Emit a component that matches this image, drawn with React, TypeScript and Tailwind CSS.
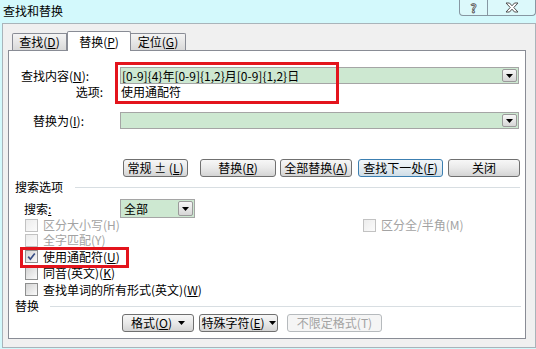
import React from "react";

function U({ children }: { children: React.ReactNode }) {
  return <span className="underline underline-offset-[1px]">{children}</span>;
}

function Arrow() {
  return (
    <svg width="7" height="4" viewBox="0 0 7 4">
      <path d="M0 0H7L3.5 4Z" fill="#000" />
    </svg>
  );
}

function DropBtn() {
  return (
    <div className="m-[1px] w-[15px] shrink-0 self-stretch border border-[#9a9a9a] rounded-[2px] bg-linear-to-b from-[#f7f7f7] to-[#d6d6d6] flex items-center justify-center">
      <Arrow />
    </div>
  );
}

function Check({ checked = false, disabled = false }: { checked?: boolean; disabled?: boolean }) {
  return (
    <div
      className={
        disabled
          ? "w-[13px] h-[13px] shrink-0 border border-[#c2c2c2] bg-linear-to-br from-[#ececec] to-[#fbfbfb]"
          : "w-[13px] h-[13px] shrink-0 border border-[#8e8f8f] bg-linear-to-br from-[#d3d3d3] to-[#fbfbfb] flex items-center justify-center"
      }
    >
      {checked && (
        <svg width="9" height="9" viewBox="0 0 9 9">
          <path d="M1.2 4.6L3.4 7.2L7.8 1.4" fill="none" stroke="#3a4f86" strokeWidth="1.7" />
        </svg>
      )}
    </div>
  );
}

function Btn({
  className,
  children,
  kind = "normal",
}: {
  className: string;
  children: React.ReactNode;
  kind?: "normal" | "focus" | "disabled";
}) {
  const look =
    kind === "focus"
      ? "border-[#3c7fb1] bg-linear-to-b from-[#f2f6f9] via-[#e4ecf1] to-[#cfdde7] text-black"
      : kind === "disabled"
      ? "border-[#b6babd] bg-[#f5f5f5] text-[#a3a3a3]"
      : "border-[#707070] bg-linear-to-b from-[#f7f7f7] via-[#e9e9e9] to-[#d4d4d4] text-black";
  return (
    <div className={`h-[18px] shrink-0 rounded-[3px] border flex items-center justify-center whitespace-nowrap ${look} ${className}`}>
      {children}
    </div>
  );
}

export default function App() {
  return (
    <div className="w-[536px] h-[349px] overflow-hidden bg-[#d3f9fc] text-[12px] leading-[14px] text-black font-['Noto_Sans_CJK_SC','Liberation_Sans',sans-serif]">
      {/* title bar */}
      <div className="flex h-[23px] items-start justify-between">
        <div className="pl-[3px] pt-[4px]">查找和替换</div>
        <div className="flex h-[16px] border border-t-0 border-[#8797a2] rounded-b-[4px] bg-[#dcf9fb]">
          <div className="w-[28px] border-r border-[#8797a2] flex items-center justify-center text-[12px] leading-[13px] font-bold text-white [-webkit-text-stroke:0.8px_#505050]">
            ?
          </div>
          <div className="w-[47px] flex items-center justify-center">
            <svg width="14" height="11" viewBox="0 0 14 11">
              <polygon
                points="1,1 4.5,1 7,3.8 9.5,1 13,1 8.8,5.5 13,10 9.5,10 7,7.2 4.5,10 1,10 5.2,5.5"
                fill="#ffffff"
                stroke="#505050"
                strokeWidth="1"
              />
            </svg>
          </div>
        </div>
      </div>

      {/* window body */}
      <div className="ml-[2px] w-[534px] h-[325px] border border-[#a9b4ba] bg-[#f0f0f0] flex flex-col">
        {/* tabs */}
        <div className="flex items-end h-[26px] pt-[7px] pl-[9px]">
          <div className="w-[55px] h-[17px] border border-b-0 border-[#898c95] rounded-tl-[2px] bg-linear-to-b from-[#f4f4f4] to-[#d9d9d9] flex items-center justify-center">
            查找(<U>D</U>)
          </div>
          <div className="relative z-10 -mb-px w-[64px] h-[20px] border border-b-0 border-[#898c95] rounded-t-[2px] bg-white flex items-center justify-center">
            替换(<U>P</U>)
          </div>
          <div className="w-[55px] h-[17px] border border-l-0 border-b-0 border-[#898c95] rounded-tr-[2px] bg-linear-to-b from-[#f4f4f4] to-[#d9d9d9] flex items-center justify-center">
            定位(<U>G</U>)
          </div>
        </div>

        {/* panel */}
        <div className="relative ml-[5px] w-[518px] h-[289px] border border-[#898c95] bg-white flex flex-col pt-[16px]">
          {/* find row */}
          <div className="flex h-[17px] items-center">
            <div className="w-[111px] shrink-0 pl-[12px] whitespace-nowrap">
              查找内容(<U>N</U>):
            </div>
            <div className="flex-1 mr-[6px] h-[17px] border border-[#a5a5a5] bg-[#cde8d1] flex">
              <div className="flex-1 pl-[1px] flex items-center whitespace-nowrap">[0-9]{"{4}"}年[0-9]{"{1,2}"}月[0-9]{"{1,2}"}日</div>
              <DropBtn />
            </div>
          </div>
          {/* options row */}
          <div className="flex h-[16px] items-center">
            <div className="w-[111px] shrink-0 pr-[17px] text-right">选项:</div>
            <div className="pl-[1px]">使用通配符</div>
          </div>
          {/* replace row */}
          <div className="flex h-[17px] items-center mt-[12px]">
            <div className="w-[111px] shrink-0 pl-[24px] whitespace-nowrap">
              替换为(<U>I</U>):
            </div>
            <div className="flex-1 mr-[6px] h-[17px] border border-[#a5a5a5] bg-[#cde8d1] flex">
              <div className="flex-1" />
              <DropBtn />
            </div>
          </div>

          {/* buttons row */}
          <div className="flex h-[18px] mt-[30px] pl-[114px]">
            <Btn className="w-[65px]">
              常规 ± (<U>L</U>)
            </Btn>
            <Btn className="w-[76px] ml-[12px]">
              替换(<U>R</U>)
            </Btn>
            <Btn className="w-[72px] ml-[4px]">
              全部替换(<U>A</U>)
            </Btn>
            <Btn className="w-[85px] ml-[6px]" kind="focus">
              查找下一处(<U>F</U>)
            </Btn>
            <Btn className="w-[72px] ml-[5px]">关闭</Btn>
          </div>

          {/* search options header */}
          <div className="flex h-[14px] items-center mt-[3px] pl-[6px]">
            <div className="whitespace-nowrap">搜索选项</div>
            <div className="flex-1 ml-[12px] mr-[5px] h-px bg-[#d8dee2]" />
          </div>

          {/* search select row */}
          <div className="flex h-[19px] items-center mt-[5px]">
            <div className="w-[111px] shrink-0 pl-[15px]">
              搜索<U>:</U>
            </div>
            <div className="w-[75px] h-[19px] border border-[#a5a5a5] bg-[#cde8d1] flex">
              <div className="flex-1 pl-[3px] flex items-center">全部</div>
              <DropBtn />
            </div>
          </div>

          {/* checkboxes */}
          <div className="flex h-[14px] items-center pl-[16px]">
            <div className="w-[338px] shrink-0 flex items-center gap-[5px] text-[#a3a3a3]">
              <Check disabled />
              <span>区分大小写(H)</span>
            </div>
            <div className="flex items-center gap-[5px] text-[#a3a3a3]">
              <Check disabled />
              <span>区分全/半角(M)</span>
            </div>
          </div>
          <div className="flex h-[16px] items-center pl-[16px] gap-[5px] text-[#a3a3a3]">
            <Check disabled />
            <span>全字匹配(Y)</span>
          </div>
          <div className="flex h-[17px] items-center pl-[16px] gap-[5px]">
            <Check checked />
            <span>
              使用通配符(<U>U</U>)
            </span>
          </div>
          <div className="flex h-[16px] items-center pl-[16px] gap-[5px]">
            <Check />
            <span>
              同音(英文)(<U>K</U>)
            </span>
          </div>
          <div className="flex h-[17px] items-center pl-[16px] gap-[5px]">
            <Check />
            <span>
              查找单词的所有形式(英文)(<U>W</U>)
            </span>
          </div>

          {/* replace header */}
          <div className="flex h-[16px] items-center pl-[6px]">
            <div className="whitespace-nowrap">替换</div>
            <div className="flex-1 ml-[11px] mr-[4px] h-px bg-[#d8dee2]" />
          </div>

          {/* bottom buttons */}
          <div className="flex h-[18px] pl-[113px]">
            <Btn className="w-[72px] gap-[6px]">
              <span>
                格式(<U>O</U>)
              </span>
              <Arrow />
            </Btn>
            <Btn className="w-[79px] ml-[5px] gap-[4px]">
              <span>
                特殊字符(<U>E</U>)
              </span>
              <Arrow />
            </Btn>
            <Btn className="w-[95px] ml-[9px]" kind="disabled">
              不限定格式(T)
            </Btn>
          </div>

          {/* red annotation boxes */}
          <div className="absolute left-[106px] top-[11px] w-[224px] h-[42px] border-[3px] border-[#e3141c]" />
          <div className="absolute left-[11px] top-[196px] w-[109px] h-[21px] border-[3px] border-[#e3141c]" />
        </div>
      </div>
    </div>
  );
}
